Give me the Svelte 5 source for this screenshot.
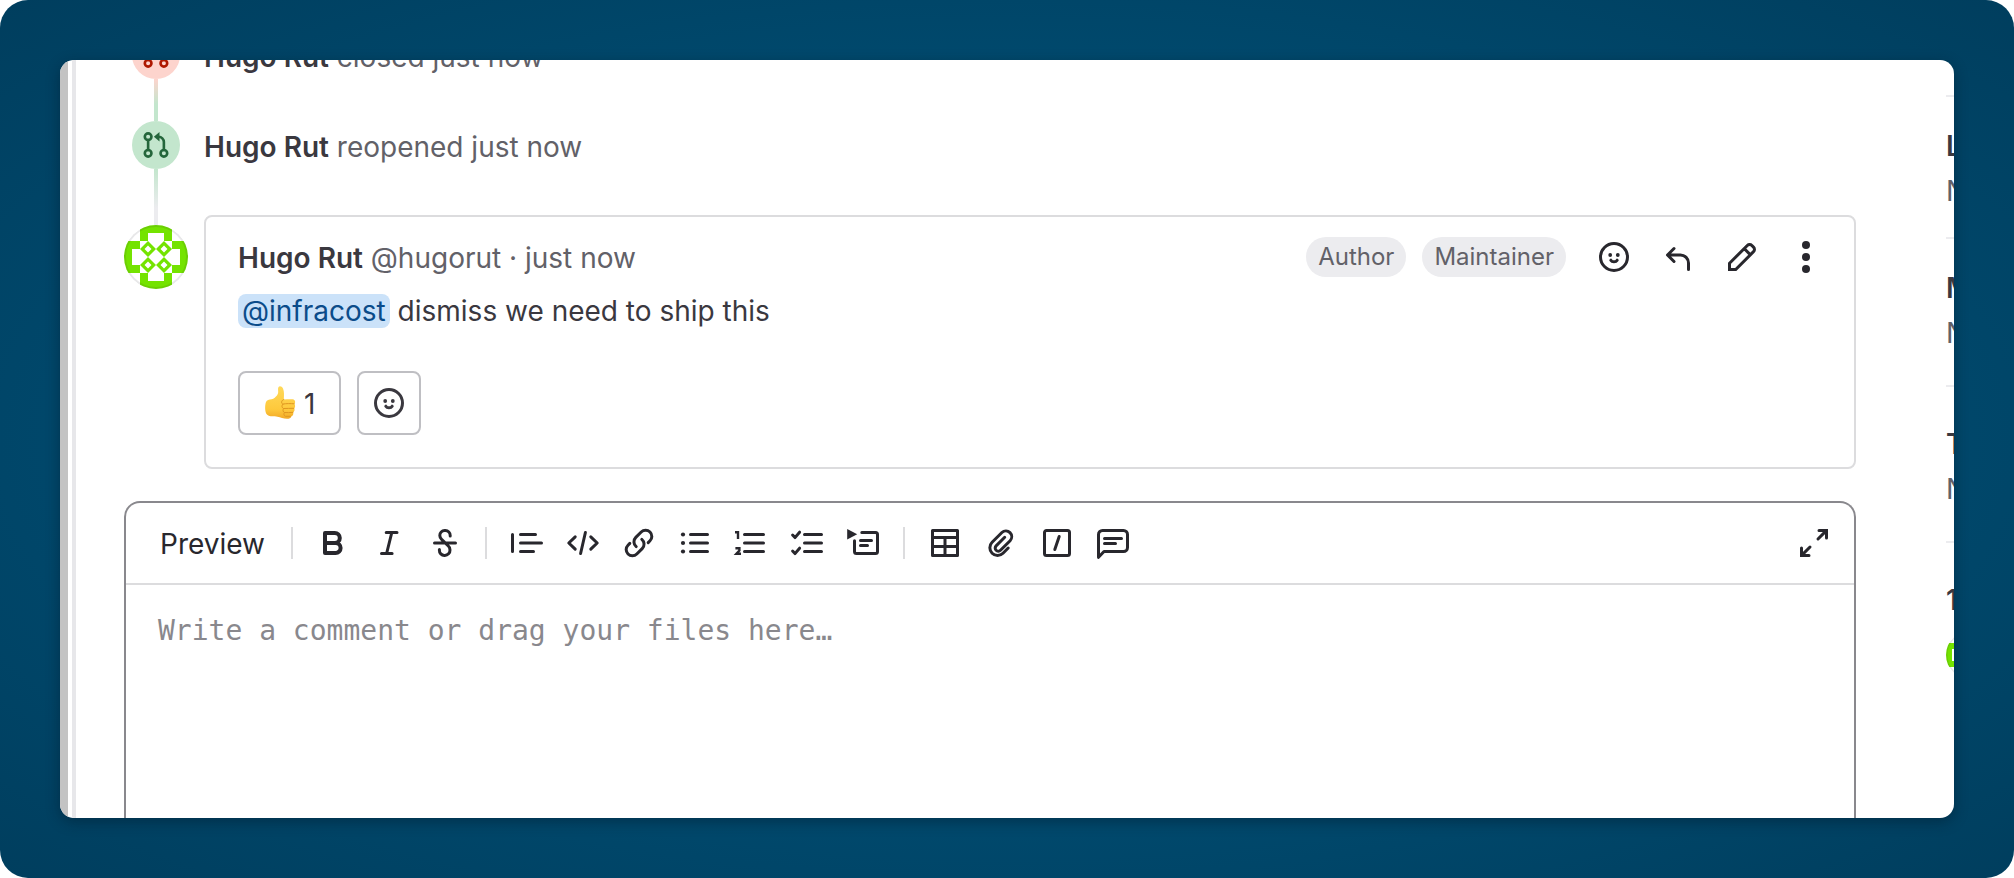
<script>
  const tools = [
    [
      { name: 'Bold', icon: 'bold' },
      { name: 'Italic', icon: 'italic' },
      { name: 'Strikethrough', icon: 'strike' }
    ],
    [
      { name: 'Insert a quote', icon: 'quote' },
      { name: 'Insert code', icon: 'code' },
      { name: 'Add a link', icon: 'link' },
      { name: 'Bullet list', icon: 'bullets' },
      { name: 'Numbered list', icon: 'numbers' },
      { name: 'Checklist', icon: 'tasks' },
      { name: 'Collapsible section', icon: 'collapsible' }
    ],
    [
      { name: 'Insert a table', icon: 'table' },
      { name: 'Attach a file', icon: 'clip' },
      { name: 'Quick actions', icon: 'slash' },
      { name: 'Insert comment template', icon: 'comment' }
    ]
  ];

  const strokes = {
    italic: 'M6.6 2.75H12M4.25 13.25h5.3M9.4 2.75 6.8 13.25',
    strike:
      'M2.75 8h10.5M10.6 4.5v-.3a2.4 2.4 0 0 0-2.4-2.45h-.4A2.4 2.4 0 0 0 5.4 4.2c0 .9.3 1.5 1 2.1l3 2.9c.7.6 1.1 1.3 1.1 2.3a2.6 2.6 0 0 1-2.6 2.7h-.2a2.5 2.5 0 0 1-2.5-2.6v-.3',
    quote: 'M.75 3.75v8.5M4.75 3.75h7.5M4.75 8h10.5M4.75 12.25h6.5',
    code: 'M4.1 4.9.9 8l3.2 3.1M11.9 4.9 15.1 8l-3.2 3.1M9.2 2.75 6.8 13.25',
    link: 'M12.6 7.8l.9-.9a3.1 3.1 0 0 0-4.4-4.4L6.4 5.2a3.1 3.1 0 0 0 .2 4.6M3.4 8.2l-.9.9a3.1 3.1 0 0 0 4.4 4.4l2.7-2.7a3.1 3.1 0 0 0-.2-4.6',
    bullets: 'M5.75 3.75h8.5M5.75 8h8.5M5.75 12.25h8.5',
    numbers: 'M4.75 3.75h9.5M4.75 8h9.5M4.75 12.25h9.5',
    tasks: 'M6.75 3.75h8.5M6.75 8h8.5M6.75 12.25h8.5M.8 4l1.2 1.3L4.3 2.6M.8 12l1.2 1.3 2.3-2.7',
    collapsible:
      'M7.4 2.75h6.85a1 1 0 0 1 1 1v8.5a1 1 0 0 1-1 1h-9.5a1 1 0 0 1-1-1V6.9M6.75 6.75h5.5M6.75 9.25h3.5',
    clip: 'M11.6 10.5 9 13.1a3.85 3.85 0 0 1-5.45-5.45l4.9-4.9a2.9 2.9 0 0 1 4.1 4.1l-4.8 4.8a1.55 1.55 0 0 1-2.2-2.2l4.3-4.3',
    table: 'M1.75 1.75h12.5v12.5H1.75zM1.75 5.25h12.5M1.75 9.75h12.5M8 5.25v9',
    slash:
      'M2.75 1.75h10.5a1 1 0 0 1 1 1v10.5a1 1 0 0 1-1 1H2.75a1 1 0 0 1-1-1V2.75a1 1 0 0 1 1-1zM9.1 4.75l-2.2 6.5',
    comment:
      'M2.75 1.75h10.5a2 2 0 0 1 2 2v6.5a2 2 0 0 1-2 2H3.5l-2.75 2.9V3.75a2 2 0 0 1 2-2zM3.75 5.75h8.5M3.75 8.25h5.5',
    reply: 'M6 3.75 2.75 7 6 10.25M3 7h6.25a4 4 0 0 1 4 4v3.25'
  };

  const details = [
    { title: 'Labels', value: 'None', size: 'short' },
    { title: 'Milestone', value: 'None', size: 'medium' },
    { title: 'Time tracking', value: 'No estimate or time spent', size: 'tall' }
  ];
</script>

{#snippet icon(name)}
  <svg class="icon" viewBox="0 0 16 16" aria-hidden="true">
    {#if name === 'bold'}
      <path d="M4 8h4.9a2.5 2.5 0 0 0 0-5H4v10h5.3a2.5 2.5 0 0 0 0-5" stroke-width="2" style:stroke-width="2" />
    {:else if name === 'smile'}
      <circle cx="8" cy="8" r="6.75" />
      <circle class="solid" cx="6.1" cy="7" r="0.95" />
      <circle class="solid" cx="9.9" cy="7" r="0.95" />
      <path d="M6.4 9.6c.3.5.9.8 1.6.8s1.300-.3 1.600-.8" />
    {:else if name === 'pencil'}
      <path
        class="miter"
        d="M1.75 14.25v-3.1l8.9-8.9a1.6 1.6 0 0 1 2.3 0l.8.8a1.6 1.6 0 0 1 0 2.3l-8.9 8.9zM9.200 3.900l2.900 2.900"
      />
    {:else if name === 'more'}
      <circle class="solid" cx="8" cy="2" r="2" />
      <circle class="solid" cx="8" cy="8" r="2" />
      <circle class="solid" cx="8" cy="14" r="2" />
    {:else if name === 'expand'}
      <path class="miter" d="M10.500 1.750h3.750V5.500M5.500 14.250H1.750V10.500" />
      <path d="M13.800 2.200 10 6M2.200 13.800 6 10" />
    {:else}
      {#if name === 'bullets'}
        <circle class="solid" cx="2" cy="3.75" r="1.05" />
        <circle class="solid" cx="2" cy="8" r="1.05" />
        <circle class="solid" cx="2" cy="12.25" r="1.05" />
      {:else if name === 'numbers'}
        <path class="digits" d="M0 2.600h1.500V6M.2 10.600h2v1.200L.700 13.400h2.300" />
      {:else if name === 'collapsible'}
        <path class="solid" d="M.1 1v5.200L5.100 3.600z" />
      {/if}
      <path d={strokes[name]} />
    {/if}
  </svg>
{/snippet}

{#snippet request(open)}
  <svg class="request" viewBox="0 0 16 16" aria-hidden="true">
    <circle cx="3.500" cy="3.250" r="1.900" />
    <circle cx="3.500" cy="12.750" r="1.900" />
    <circle cx="12.500" cy="12.750" r="1.900" />
    <path d="M3.500 5.200v5.600" />
    {#if open}
      <path d="M12.500 10.800V6.300a3 3 0 0 0-3-3H9" />
      <path class="solid" d="M6.800 3.300 10 .6v5.400z" />
    {:else}
      <path d="M12.500 10.800V7.500M10.800 1.500l3.400 3.400M14.200 1.500l-3.400 3.400" />
    {/if}
  </svg>
{/snippet}

{#snippet identicon()}
  <svg class="identicon" viewBox="0 0 64 64" role="img" aria-label="Hugo Rut's avatar">
    <clipPath id="round"><circle cx="32" cy="32" r="32" /></clipPath>
    <g clip-path="url(#round)">
      <rect width="64" height="64" fill="#fff" />
      <path
        fill="#74e300"
        fill-rule="evenodd"
        d="M16 0h32v16h16v32H48v16H16V48H0V16h16zM24 8v8h-8v8H8v16h8v8h8v8h16v-8h8v-8h8V24h-8v-8h-8V8z"
      />
      <path
        fill="#74e300"
        fill-rule="evenodd"
        d="M24 16l8 8 8-8 8 8-8 8 8 8-8 8-8-8-8 8-8-8 8-8-8-8zM24 20.500 20.500 24l3.500 3.500 3.500-3.500zM40 20.500 36.500 24l3.500 3.500 3.500-3.500zM24 36.500 20.500 40l3.500 3.500 3.500-3.500zM40 36.500 36.500 40l3.500 3.500 3.500-3.500zM32 24l-8 8 8 8 8-8z"
      />
      <circle cx="32" cy="32" r="31" fill="none" stroke="#1f1e24" stroke-opacity="0.1" stroke-width="2" />
    </g>
  </svg>
{/snippet}

<div class="page">
  <div class="window">
    <div class="rail"></div>
    <main>
      <div class="event">
        <span class="marker closed">{@render request(false)}</span>
        <p><strong>Hugo Rut</strong> closed just now</p>
      </div>
      <div class="event">
        <span class="marker reopened">{@render request(true)}</span>
        <p><strong>Hugo Rut</strong> reopened just now</p>
      </div>

      <div class="note">
        <div class="avatar">{@render identicon()}</div>
        <article>
          <header>
            <p><strong>Hugo Rut</strong> @hugorut · just now</p>
            <span class="badge">Author</span>
            <span class="badge">Maintainer</span>
            <div class="actions">
              <button aria-label="Add reaction">{@render icon('smile')}</button>
              <button aria-label="Reply to comment">{@render icon('reply')}</button>
              <button aria-label="Edit comment">{@render icon('pencil')}</button>
              <button aria-label="More actions">{@render icon('more')}</button>
            </div>
          </header>
          <p class="body"><a href="#infracost">@infracost</a> dismiss we need to ship this</p>
          <div class="reactions">
            <button aria-label="Thumbs up, 1 reaction">
              <svg class="thumb" viewBox="0 0 32 32" aria-hidden="true">
                <defs>
                  <linearGradient id="skin" x1="0" y1="0" x2="0" y2="1">
                    <stop offset="0" stop-color="#ffd95a" />
                    <stop offset="0.7" stop-color="#fec93c" />
                    <stop offset="1" stop-color="#f2a928" />
                  </linearGradient>
                </defs>
                <path
                  fill="url(#skin)"
                  d="M2 15c.8-2 3-2.300 5.500-2.700 3-.6 6-3.800 6.600-6.300.4-2-.5-4.300.3-5.800C15.500-1.400 18-.6 19 1.500c1.400 3 1 6.800.8 11 3-.3 6.500-.5 9-.2 2.400.3 3 3.300 1.600 4.600 1.100 1.300.9 3.400-.2 4.400.8 1.500.3 3.300-1 4.100.5 1.600-.3 3.300-1.700 3.800-.5 1.900-2.400 2.600-4.500 2.600-3.500 0-6.500-1.300-9.500-2-3.500-.7-7.500.6-10.300-2C.6 25.500.8 18 2 15z"
                />
                <path
                  fill="none"
                  stroke="#df9620"
                  stroke-linecap="round"
                  d="M19.800 12.500c-2.200.5-3 3.300-1.200 4.600 3.500-.6 7.800-.6 11.600-.3M18.900 17.300c-1.500 1.300-1.200 3.400.5 4.200 3.500-.1 6.900-.1 10.400-.2M19.600 21.600c-1.200 1.300-.6 3.300.8 3.900 2.700.2 5.500.1 8.400-.1M20.400 25.600c-1 1.200-.5 3 .9 3.700h5"
                />
              </svg>
              <span>1</span>
            </button>
            <button class="square" aria-label="Add reaction">{@render icon('smile')}</button>
          </div>
        </article>
      </div>

      <form class="editor">
        <div class="toolbar">
          <button type="button" class="preview">Preview</button>
          {#each tools as group}
            <span class="divider"></span>
            <div class="group">
              {#each group as tool}
                <button type="button" aria-label={tool.name}>{@render icon(tool.icon)}</button>
              {/each}
            </div>
          {/each}
          <button type="button" class="fullscreen" aria-label="Go full screen">{@render icon('expand')}</button>
        </div>
        <textarea aria-label="Comment" placeholder="Write a comment or drag your files here…"></textarea>
      </form>
    </main>

    <aside>
      {#each details as detail}
        <section class={detail.size}>
          <h2>{detail.title}</h2>
          <p>{detail.value}</p>
        </section>
      {/each}
      <section class="people">
        <h2>1 Participant</h2>
        <div class="participant">{@render identicon()}</div>
      </section>
    </aside>
  </div>
</div>

<style>
  :global(body) {
    margin: 0;
    background: #fff;
  }

  .page,
  .page * {
    box-sizing: border-box;
  }

  .page {
    display: flex;
    min-height: 100vh;
    padding: 60px;
    border-radius: 28px;
    background: radial-gradient(ellipse at center, #004d74 0%, #00496d 60%, #003e5e 100%);
    color: #3a383f;
    font: 28px/44px Inter, 'Liberation Sans', sans-serif;
  }

  .window {
    display: flex;
    flex: 1;
    min-width: 0;
    overflow: hidden;
    border-radius: 14px;
    background: #fff;
    box-shadow: 0 4px 14px rgb(0 20 35 / 40%);
  }

  .rail {
    flex: none;
    width: 16px;
    border-left: 8px solid #c3c3c3;
    border-right: 4px solid #e7e7ea;
  }

  main {
    display: flex;
    flex: 1;
    flex-direction: column;
    min-width: 0;
    margin-top: -29px;
    padding: 0 90px 0 48px;
  }

  p,
  h2 {
    margin: 0;
  }

  strong,
  h2 {
    color: #3a383f;
    font-weight: 600;
  }

  button {
    display: flex;
    align-items: center;
    justify-content: center;
    padding: 0;
    border: 0;
    background: none;
    color: #28272d;
    font: inherit;
  }

  .icon {
    display: block;
    width: 32px;
    height: 32px;
  }

  .icon,
  .request {
    overflow: visible;
    fill: none;
    stroke: currentColor;
    stroke-width: 1.5;
    stroke-linecap: round;
    stroke-linejoin: round;
  }

  .icon .solid,
  .request .solid {
    fill: currentColor;
    stroke: none;
  }

  .icon .miter {
    stroke-linejoin: miter;
  }

  .icon .digits {
    stroke-width: 1.2;
    stroke-linecap: butt;
    stroke-linejoin: miter;
  }

  .event {
    display: flex;
    gap: 24px;
    margin-bottom: 38px;
    padding-left: 8px;
    color: #626168;
    line-height: 52px;
  }

  .marker {
    position: relative;
    display: flex;
    flex: none;
    align-items: center;
    justify-content: center;
    width: 48px;
    height: 48px;
    border-radius: 50%;
  }

  .marker::after {
    position: absolute;
    top: 100%;
    left: 22px;
    width: 4px;
    content: '';
  }

  .request {
    width: 28px;
    height: 28px;
  }

  .closed {
    background: #fdd4cd;
    color: #ae1800;
  }

  .closed::after {
    height: 42px;
    background: linear-gradient(#fdd4cd, #c3e6cd 60%);
  }

  .reopened {
    background: #c3e6cd;
    color: #24663b;
  }

  .reopened::after {
    height: 56px;
    background: linear-gradient(#c3e6cd, #ececef 70%);
  }

  .note {
    display: flex;
    gap: 16px;
    margin-top: 4px;
  }

  .avatar {
    position: relative;
    flex: none;
    width: 64px;
    height: 64px;
    margin-top: 10px;
  }

  .identicon {
    display: block;
    width: 100%;
    height: 100%;
  }

  article {
    flex: 1;
    min-width: 0;
    padding: 8px 0 32px 32px;
    border: 2px solid #dcdcde;
    border-radius: 8px;
  }

  header {
    display: flex;
    align-items: center;
    gap: 16px;
    padding-right: 16px;
    color: #626168;
  }

  header p {
    flex: 1;
    padding-top: 2px;
  }

  .badge {
    padding: 0 12px;
    border-radius: 20px;
    background: #ececef;
    font-size: 24px;
    line-height: 40px;
  }

  .actions {
    display: flex;
  }

  .actions button {
    width: 64px;
    height: 64px;
  }

  .body a {
    padding: 0 4px;
    border-radius: 8px;
    background: #cbe2f9;
    color: #0b4c8a;
    text-decoration: none;
  }

  .reactions {
    display: flex;
    gap: 16px;
    margin-top: 38px;
  }

  .reactions button {
    gap: 8px;
    height: 64px;
    padding: 0 24px;
    border: 2px solid #bfbfc3;
    border-radius: 8px;
    color: #3a383f;
  }

  .reactions span {
    padding-top: 2px;
  }

  .reactions .square {
    width: 64px;
    padding: 0;
  }

  .thumb {
    width: 32px;
    height: 32px;
    overflow: visible;
  }

  .editor {
    display: flex;
    flex: 1;
    flex-direction: column;
    margin-top: 32px;
    border: 2px solid #89888d;
    border-bottom: 0;
    border-radius: 16px 16px 0 0;
  }

  .toolbar {
    display: flex;
    align-items: center;
    height: 82px;
    padding: 0 16px 0 8px;
    border-bottom: 2px solid #dcdcde;
  }

  .preview {
    padding: 2px 26px 0;
  }

  .divider {
    width: 2px;
    height: 32px;
    background: #dcdcde;
  }

  .group {
    display: flex;
    gap: 8px;
    padding: 0 16px;
  }

  .group button,
  .fullscreen {
    width: 48px;
    height: 48px;
  }

  .fullscreen {
    margin-left: auto;
  }

  textarea {
    display: block;
    flex: 1;
    width: 100%;
    min-height: 200px;
    padding: 26px 32px;
    border: 0;
    outline: 0;
    background: none;
    color: #3a383f;
    font: 28px/40px 'DejaVu Sans Mono', monospace;
    resize: none;
  }

  textarea::placeholder {
    color: #89888d;
    opacity: 1;
  }

  aside {
    flex: none;
    width: 8px;
    padding-top: 35px;
    overflow: hidden;
    white-space: nowrap;
  }

  aside section {
    padding-top: 26px;
    border-top: 2px solid #ececef;
  }

  aside h2 {
    font-size: 28px;
    line-height: 46px;
  }

  aside p {
    color: #626168;
  }

  .short {
    height: 142px;
  }

  .medium {
    height: 148px;
  }

  aside .tall {
    height: 156px;
    padding-top: 34px;
  }

  aside .people {
    padding-top: 34px;
  }

  .participant {
    width: 48px;
    height: 48px;
    margin-top: 8px;
  }
</style>
